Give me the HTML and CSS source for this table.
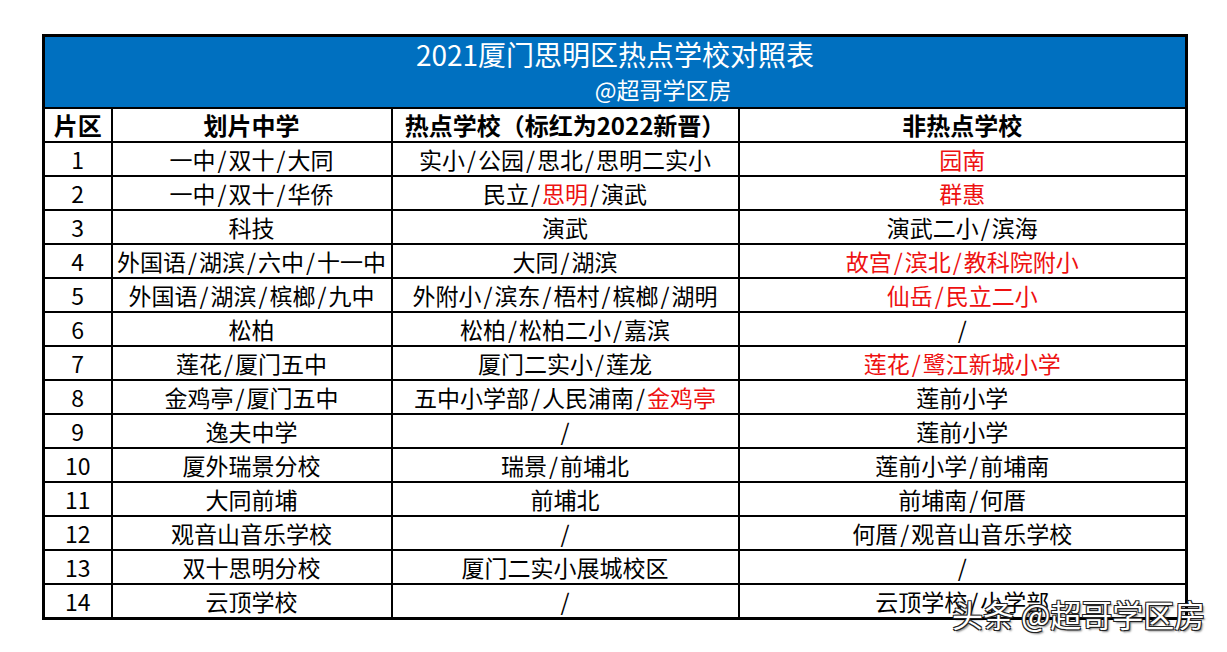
FILE: index.html
```html
<!DOCTYPE html>
<html lang="zh-CN">
<head>
<meta charset="utf-8">
<title>2021厦门思明区热点学校对照表</title>
<link rel="stylesheet" href="styles.css">
</head>
<body>
<div class="page">
  <table class="sheet">
    <colgroup>
      <col class="c1"><col class="c2"><col class="c3"><col class="c4">
    </colgroup>
    <tr class="title-row">
      <td colspan="4">
        <div class="title">2021厦门思明区热点学校对照表</div>
        <div class="subtitle">@超哥学区房</div>
      </td>
    </tr>
    <tr class="head">
      <th>片区</th><th>划片中学</th><th>热点学校（标红为2022新晋）</th><th>非热点学校</th>
    </tr>
    <tr><td>1</td><td>一中<i class="s">/</i>双十<i class="s">/</i>大同</td><td>实小<i class="s">/</i>公园<i class="s">/</i>思北<i class="s">/</i>思明二实小</td><td><span class="red">园南</span></td></tr>
    <tr><td>2</td><td>一中<i class="s">/</i>双十<i class="s">/</i>华侨</td><td>民立<i class="s">/</i><span class="red">思明</span><i class="s">/</i>演武</td><td><span class="red">群惠</span></td></tr>
    <tr><td>3</td><td>科技</td><td>演武</td><td>演武二小<i class="s">/</i>滨海</td></tr>
    <tr><td>4</td><td>外国语<i class="s">/</i>湖滨<i class="s">/</i>六中<i class="s">/</i>十一中</td><td>大同<i class="s">/</i>湖滨</td><td><span class="red">故宫<i class="s">/</i>滨北<i class="s">/</i>教科院附小</span></td></tr>
    <tr><td>5</td><td>外国语<i class="s">/</i>湖滨<i class="s">/</i>槟榔<i class="s">/</i>九中</td><td>外附小<i class="s">/</i>滨东<i class="s">/</i>梧村<i class="s">/</i>槟榔<i class="s">/</i>湖明</td><td><span class="red">仙岳<i class="s">/</i>民立二小</span></td></tr>
    <tr><td>6</td><td>松柏</td><td>松柏<i class="s">/</i>松柏二小<i class="s">/</i>嘉滨</td><td><i class="s">/</i></td></tr>
    <tr><td>7</td><td>莲花<i class="s">/</i>厦门五中</td><td>厦门二实小<i class="s">/</i>莲龙</td><td><span class="red">莲花<i class="s">/</i>鹭江新城小学</span></td></tr>
    <tr><td>8</td><td>金鸡亭<i class="s">/</i>厦门五中</td><td>五中小学部<i class="s">/</i>人民浦南<i class="s">/</i><span class="red">金鸡亭</span></td><td>莲前小学</td></tr>
    <tr><td>9</td><td>逸夫中学</td><td><i class="s">/</i></td><td>莲前小学</td></tr>
    <tr><td>10</td><td>厦外瑞景分校</td><td>瑞景<i class="s">/</i>前埔北</td><td>莲前小学<i class="s">/</i>前埔南</td></tr>
    <tr><td>11</td><td>大同前埔</td><td>前埔北</td><td>前埔南<i class="s">/</i>何厝</td></tr>
    <tr><td>12</td><td>观音山音乐学校</td><td><i class="s">/</i></td><td>何厝<i class="s">/</i>观音山音乐学校</td></tr>
    <tr><td>13</td><td>双十思明分校</td><td>厦门二实小展城校区</td><td><i class="s">/</i></td></tr>
    <tr><td>14</td><td>云顶学校</td><td><i class="s">/</i></td><td>云顶学校<i class="s">/</i>小学部</td></tr>
  </table>
  <div class="watermark">头条 @超哥学区房</div>
</div>
</body>
</html>
```
FILE: styles.css
```css
html, body {
  margin: 0;
  padding: 0;
  background: #ffffff;
}
.page {
  position: relative;
  width: 1227px;
  height: 652px;
  padding: 34px 0 0 42px;
  box-sizing: border-box;
  font-family: "Noto Sans CJK SC", "Noto Sans", sans-serif;
  color: #000000;
}
.sheet {
  border-collapse: collapse;
  table-layout: fixed;
  width: 1143px;
  border: 3px solid #000000;
}
.c1 { width: 68px; }
.c2 { width: 280px; }
.c3 { width: 347px; }
.c4 { width: 448px; }
.sheet td, .sheet th {
  border: 2px solid #000000;
  padding: 0;
  text-align: center;
  font-size: 23px;
  line-height: 30px;
  height: 32px;
  white-space: nowrap;
  overflow: hidden;
}
.sheet th {
  font-weight: 700;
  font-size: 24px;
}
.s {
  font-style: normal;
  margin: 0 2px;
}
.title-row td {
  background: #0070c0;
  color: #ffffff;
  height: 70px;
  line-height: 1;
  vertical-align: top;
}
.title {
  font-size: 28px;
  line-height: 30px;
  padding-top: 2px;
}
.subtitle {
  font-size: 23px;
  line-height: 28px;
  padding-top: 6px;
  padding-left: 96px;
}
.red {
  color: #ee1111;
}
.watermark {
  position: absolute;
  left: 952px;
  top: 594px;
  font-size: 31px;
  line-height: 40px;
  color: #ffffff;
  text-shadow: 1px 1px 0 #222, -1px -1px 0 #222, 1px -1px 0 #222, -1px 1px 0 #222, 2px 2px 2px rgba(0,0,0,0.5);
  white-space: nowrap;
}
```
